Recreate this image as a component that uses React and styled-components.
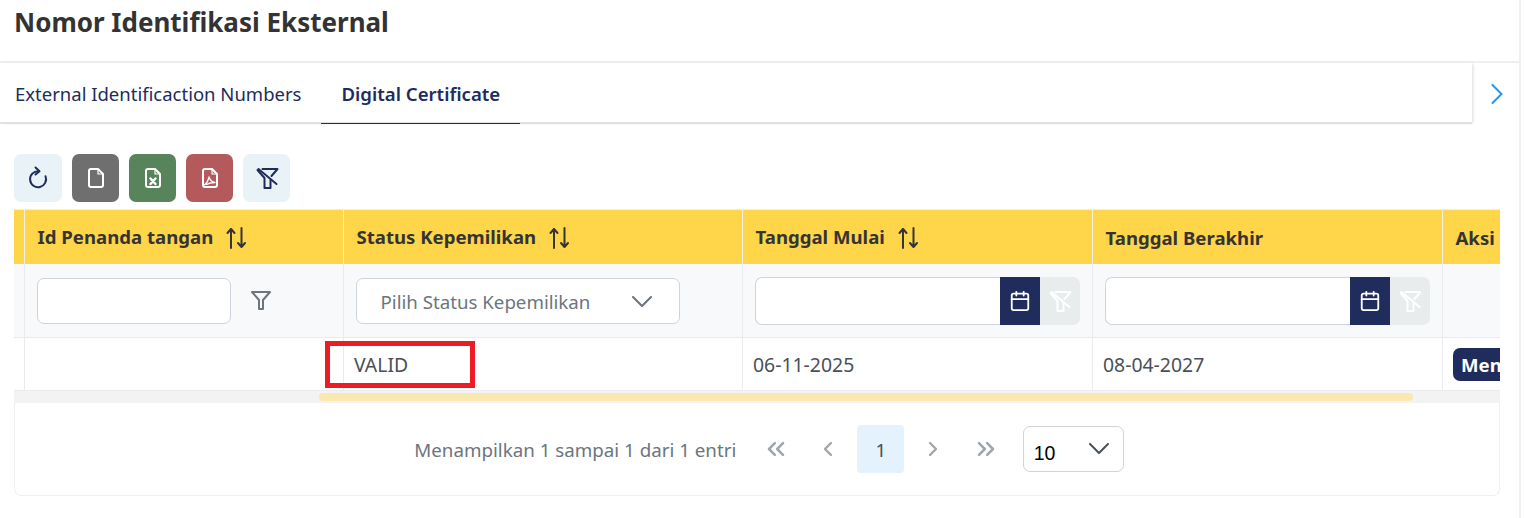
import React from "react";
import styled, { createGlobalStyle } from "styled-components";
import { ChevronLeft, ChevronRight, ChevronsLeft, ChevronsRight, Calendar } from "lucide-react";

const GlobalStyle = createGlobalStyle`
  html, body { margin: 0; padding: 0; background: #fff; }
  body { font-family: "Noto Sans", "Open Sans", sans-serif; color: #495057; }
  * { box-sizing: border-box; }
`;

const Page = styled.div`
  width: 1521px;
  height: 518px;
  border-right: 2px solid #f0f0f0;
  overflow: hidden;
`;

const TitleBar = styled.div`
  height: 63px;
  padding: 4px 14px 0;
  border-bottom: 2px solid #eeeff1;
`;

const Title = styled.h1`
  margin: 0;
  font-size: 26px;
  line-height: 36px;
  font-weight: 700;
  color: #333333;
`;

const TabRow = styled.div`
  display: flex;
  height: 61px;
`;

const TabList = styled.div`
  display: flex;
  flex: 1;
  border-bottom: 2px solid #dee2e6;
  box-shadow: 2px 0 3px -1px #d8dadd;
`;

const Tab = styled.div`
  height: 61px;
  padding: 0 19.5px 0 ${(p) => (p.$first ? "15px" : "20.500px")};
  display: flex;
  align-items: center;
  font-size: ${(p) => (p.$active ? "18.6px" : "18.5px")};
  font-weight: ${(p) => (p.$active ? 600 : 400)};
  color: #202c5c;
  border-bottom: ${(p) => (p.$active ? "1px solid #202c5c" : "none")};
`;

const TabNext = styled.div`
  width: 47px;
  padding-left: 2px;
  display: flex;
  align-items: center;
  justify-content: center;
  color: #2196f3;
`;

const Content = styled.div`
  padding: 30px 21px 0 14px;
`;

const Toolbar = styled.div`
  display: flex;
  gap: 10px;
  height: 55px;
`;

const ToolButton = styled.div`
  width: ${(p) => (p.$wide ? "48px" : "47px")};
  height: 48px;
  border-radius: 7px;
  display: flex;
  align-items: center;
  justify-content: center;
  background: ${(p) => p.$bg};
  color: ${(p) => p.$fg};
`;

const TableWrap = styled.div`
  position: relative;
  width: 1486px;
  overflow: hidden;
`;

const Table = styled.table`
  width: 1486px;
  border-collapse: collapse;
  table-layout: fixed;
`;

const HeadCell = styled.th`
  height: 54px;
  padding: 1px 12px 0 13px;
  background: #ffd54a;
  border-right: 1px solid #f4f1e4;
  border-top: 1px solid #eceef0;
  text-align: left;
  font-size: 18.6px;
  font-weight: 700;
  color: #343434;
  white-space: nowrap;
  overflow: hidden;
`;

const SortIcon = styled.svg`
  margin-left: 13px;
  vertical-align: -6px;
`;

const FilterCell = styled.td`
  height: 74px;
  padding: 2px 12px 0;
  background: #f8f9fa;
  border-right: 1px solid #e9ecef;
  border-bottom: 1px solid #e9ecef;
`;

const FilterInner = styled.div`
  display: flex;
  align-items: center;
`;

const TextInput = styled.div`
  width: 194px;
  height: 46px;
  background: #fff;
  border: 1px solid #ced4da;
  border-radius: 7px;
`;

const FilterIcon = styled.div`
  margin-left: 19px;
  display: flex;
  color: #6c757d;
`;

const SelectBox = styled.div`
  width: 324px;
  height: 46px;
  padding: 0 27px 0 24px;
  display: flex;
  align-items: center;
  justify-content: space-between;
  background: #fff;
  border: 1px solid #ced4da;
  border-radius: 7px;
  font-size: 18.7px;
  color: #6c757d;
  white-space: nowrap;
`;

const DateInput = styled.div`
  width: 245px;
  height: 48px;
  background: #fff;
  border: 1px solid #ced4da;
  border-right: none;
  border-radius: 7px 0 0 7px;
`;

const CalendarButton = styled.div`
  width: 40px;
  height: 48px;
  display: flex;
  align-items: center;
  justify-content: center;
  background: #202c5c;
  color: #fff;
`;

const ClearButton = styled.div`
  width: 40px;
  height: 48px;
  display: flex;
  align-items: center;
  justify-content: center;
  background: #e9ecec;
  border-radius: 0 7px 7px 0;
  color: #fff;
`;

const BodyCell = styled.td`
  height: 53px;
  padding: 0 10.500px;
  background: #fff;
  border-right: 1px solid #e9ecef;
  border-bottom: 1px solid #e9ecef;
  font-size: 19.400px;
  color: #495057;
  white-space: nowrap;
  overflow: hidden;
`;

const ActionButton = styled.span`
  display: inline-block;
  height: 33px;
  padding: 0 30px 0 8px;
  border-radius: 7px;
  background: #202c5c;
  color: #fff;
  font-size: 18.6px;
  font-weight: 700;
  line-height: 33px;
`;

const Highlight = styled.div`
  position: absolute;
  left: 311px;
  top: 132px;
  width: 150px;
  height: 47px;
  border: 5px solid #ed1c24;
`;

const ScrollTrack = styled.div`
  height: 12px;
  padding: 2px 87px 2px 305px;
  background: #f3f3f3;
`;

const ScrollThumb = styled.div`
  height: 8px;
  border-radius: 4px;
  background: #fbe7b0;
`;

const Paginator = styled.div`
  width: 1486px;
  height: 93px;
  display: flex;
  align-items: center;
  justify-content: center;
  padding-left: 24px;
  background: #fff;
  border: 1px solid #eeeff1;
  border-top: none;
  border-radius: 0 0 7px 7px;
`;

const PageInfo = styled.span`
  margin-right: 16px;
  font-size: 18.750px;
  color: #6c757d;
`;

const PageButton = styled.div`
  width: 47px;
  height: 48px;
  margin-right: ${(p) => (p.$last ? "13.5px" : "5.5px")};
  display: flex;
  align-items: center;
  justify-content: center;
  border-radius: 4px;
  background: ${(p) => (p.$active ? "#e3f2fd" : "transparent")};
  color: ${(p) => (p.$active ? "#495057" : "#a0a6ac")};
  font-size: 18.7px;
`;

const RowsSelect = styled.div`
  width: 101px;
  height: 46px;
  padding: 8px 14px 0 10px;
  display: flex;
  align-items: center;
  justify-content: space-between;
  border: 1px solid #ced4da;
  border-radius: 7px;
  font-family: "Liberation Sans", sans-serif;
  font-size: 19.5px;
  color: #000;
`;

const RowsChevron = styled.div`
  display: flex;
  margin-top: -10px;
  color: #495057;
`;

const Glyph = ({ size = 24, stroke = 2, children }) => (
  <svg width={size} height={size} viewBox="0 0 24 24" fill="none" stroke="currentColor" strokeWidth={stroke} strokeLinecap="round" strokeLinejoin="round">
    {children}
  </svg>
);

const RefreshIcon = () => (
  <Glyph>
    <path d="M12.500 5.200a8 8 0 1 0 7 5" />
    <path d="M9.500 1.500l4 3.700-4 3.300" />
  </Glyph>
);

const sheet = "M7 3h7l5 5v11a2 2 0 0 1-2 2H7a2 2 0 0 1-2-2V5a2 2 0 0 1 2-2z";

const FileIcon = () => (
  <Glyph>
    <path d={sheet} />
    <path d="M14 3v5h5" strokeWidth="1.200" />
  </Glyph>
);

const ExcelIcon = () => (
  <Glyph>
    <path d={sheet} />
    <path d="M14 3v5h5" strokeWidth="1.200" />
    <path d="M9.500 12.500l5 5.500M14.500 12.500l-5 5.500" strokeWidth="2.400" />
  </Glyph>
);

const PdfIcon = () => (
  <Glyph>
    <path d={sheet} />
    <path d="M14 3v5h5" strokeWidth="1.200" />
    <path d="M6 19c2-1 4-3.500 5-8 1 3 3 5 6 5.500-3 0-6 .5-8.500 2" strokeWidth="1.300" />
  </Glyph>
);

const FilterSlashIcon = () => (
  <Glyph>
    <path d="M7.500 3h15l-6 7" />
    <path d="M3.500 3l18 15" />
    <path d="M2.500 4l7 8v10h6v-8" />
  </Glyph>
);

const SortArrows = () => (
  <SortIcon width="21" height="24" viewBox="0 0 21 24" fill="none" stroke="#343434" strokeWidth="2" strokeLinecap="round" strokeLinejoin="round">
    <path d="M5 22V3M1.500 7L5 3l3.500 4" />
    <path d="M15.500 2v19M12 17l3.500 4 3.500-4" />
  </SortIcon>
);

const FunnelIcon = () => (
  <svg width="22" height="22" viewBox="0 0 22 22" fill="none" stroke="currentColor" strokeWidth="2" strokeLinejoin="round">
    <path d="M2 2h18l-7 8v9H9v-9z" />
  </svg>
);

const DownChevron = () => (
  <svg width="20" height="11" viewBox="0 0 20 11" fill="none" stroke="currentColor" strokeWidth="2" strokeLinecap="round" strokeLinejoin="round">
    <path d="M1 1l9 9 9-9" />
  </svg>
);

const NextChevron = () => (
  <svg width="12" height="20" viewBox="0 0 12 20" fill="none" stroke="currentColor" strokeWidth="2" strokeLinecap="round" strokeLinejoin="round">
    <path d="M1.500 1l9 9-9 9" />
  </svg>
);

function App() {
  return (
    <Page>
      <GlobalStyle />
      <TitleBar>
        <Title>Nomor Identifikasi Eksternal</Title>
      </TitleBar>
      <TabRow>
        <TabList>
          <Tab $first>External Identificaction Numbers</Tab>
          <Tab $active>Digital Certificate</Tab>
        </TabList>
        <TabNext>
          <NextChevron />
        </TabNext>
      </TabRow>
      <Content>
        <Toolbar>
          <ToolButton $wide $bg="#e9f3f7" $fg="#202c5c"><RefreshIcon /></ToolButton>
          <ToolButton $bg="#6f6f6f" $fg="#fff"><FileIcon /></ToolButton>
          <ToolButton $bg="#58845b" $fg="#fff"><ExcelIcon /></ToolButton>
          <ToolButton $bg="#b55a5c" $fg="#fff"><PdfIcon /></ToolButton>
          <ToolButton $bg="#e9f3f7" $fg="#202c5c"><FilterSlashIcon /></ToolButton>
        </Toolbar>
        <TableWrap>
          <Table>
            <colgroup>
              <col width="10" />
              <col width="319" />
              <col width="399" />
              <col width="350" />
              <col width="350" />
              <col width="58" />
            </colgroup>
            <thead>
              <tr>
                <HeadCell />
                <HeadCell>Id Penanda tangan<SortArrows /></HeadCell>
                <HeadCell>Status Kepemilikan<SortArrows /></HeadCell>
                <HeadCell>Tanggal Mulai<SortArrows /></HeadCell>
                <HeadCell>Tanggal Berakhir</HeadCell>
                <HeadCell>Aksi</HeadCell>
              </tr>
              <tr>
                <FilterCell />
                <FilterCell>
                  <FilterInner>
                    <TextInput />
                    <FilterIcon><FunnelIcon /></FilterIcon>
                  </FilterInner>
                </FilterCell>
                <FilterCell>
                  <SelectBox>
                    Pilih Status Kepemilikan
                    <DownChevron />
                  </SelectBox>
                </FilterCell>
                <FilterCell>
                  <FilterInner>
                    <DateInput />
                    <CalendarButton><Calendar size={22} strokeWidth={2} /></CalendarButton>
                    <ClearButton><FilterSlashIcon /></ClearButton>
                  </FilterInner>
                </FilterCell>
                <FilterCell>
                  <FilterInner>
                    <DateInput />
                    <CalendarButton><Calendar size={22} strokeWidth={2} /></CalendarButton>
                    <ClearButton><FilterSlashIcon /></ClearButton>
                  </FilterInner>
                </FilterCell>
                <FilterCell />
              </tr>
            </thead>
            <tbody>
              <tr>
                <BodyCell />
                <BodyCell />
                <BodyCell>VALID</BodyCell>
                <BodyCell>06-11-2025</BodyCell>
                <BodyCell>08-04-2027</BodyCell>
                <BodyCell><ActionButton>Men</ActionButton></BodyCell>
              </tr>
            </tbody>
          </Table>
          <Highlight />
          <ScrollTrack>
            <ScrollThumb />
          </ScrollTrack>
        </TableWrap>
        <Paginator>
          <PageInfo>Menampilkan 1 sampai 1 dari 1 entri</PageInfo>
          <PageButton><ChevronsLeft size={28} strokeWidth={2.2} /></PageButton>
          <PageButton><ChevronLeft size={24} strokeWidth={2.4} /></PageButton>
          <PageButton $active>1</PageButton>
          <PageButton><ChevronRight size={24} strokeWidth={2.4} /></PageButton>
          <PageButton $last><ChevronsRight size={28} strokeWidth={2.2} /></PageButton>
          <RowsSelect>
            10
            <RowsChevron><DownChevron /></RowsChevron>
          </RowsSelect>
        </Paginator>
      </Content>
    </Page>
  );
}

export default App;
